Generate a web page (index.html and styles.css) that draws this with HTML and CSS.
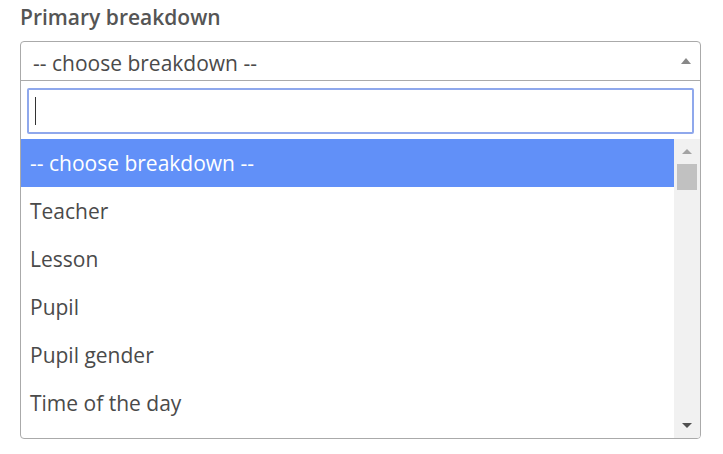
FILE: index.html
```html
<!DOCTYPE html>
<html>
<head>
<meta charset="utf-8">
<link rel="stylesheet" href="styles.css">
</head>
<body>
<div class="field">
  <div class="label">Primary breakdown</div>
  <div class="combo">
    <div class="selection">
      <span class="selection-text">-- choose breakdown --</span>
      <span class="arrow"></span>
    </div>
    <div class="dropdown">
      <div class="search"><span class="caret"></span></div>
      <div class="results">
        <ul class="options">
          <li class="option highlighted">-- choose breakdown --</li>
          <li class="option">Teacher</li>
          <li class="option">Lesson</li>
          <li class="option">Pupil</li>
          <li class="option">Pupil gender</li>
          <li class="option">Time of the day</li>
        </ul>
        <div class="scrollbar">
          <div class="sb-btn"><span class="tri-up"></span></div>
          <div class="thumb"></div>
          <div class="sb-track"></div>
          <div class="sb-btn"><span class="tri-down"></span></div>
        </div>
      </div>
    </div>
  </div>
</div>
</body>
</html>
```

FILE: styles.css
```css
html, body {
  margin: 0;
  padding: 0;
  background: #fff;
}
body {
  font-family: "Open Sans", "Liberation Sans", sans-serif;
  color: #444;
}
.field {
  padding: 4px 0 0 20px;
  width: 681px;
}
.label {
  font-size: 21px;
  font-weight: 600;
  color: #555;
  line-height: 26px;
  height: 26px;
  margin-bottom: 11px;
}
.combo {
  border: 1px solid #aaa;
  border-radius: 4px;
  overflow: hidden;
}
.selection {
  height: 38px;
  border-bottom: 1px solid #aaa;
  display: flex;
  align-items: center;
  justify-content: space-between;
  padding: 0 8px 0 12px;
}
.selection-text {
  font-size: 21px;
  color: #4a4a4a;
  line-height: 26px;
  padding-top: 3px;
}
.arrow {
  width: 0;
  height: 0;
  border-left: 5px solid transparent;
  border-right: 5px solid transparent;
  border-bottom: 6px solid #888;
  margin-right: 1px;
}
.dropdown {
  padding-top: 7px;
}
.search {
  margin: 0 6px;
  height: 42px;
  border: 2px solid #8fa8ec;
  border-radius: 2px;
  display: flex;
  align-items: center;
  padding-left: 6px;
}
.caret {
  display: block;
  width: 1px;
  height: 28px;
  background: #333;
}
.results {
  margin-top: 5px;
  height: 299px;
  display: flex;
  overflow: hidden;
}
.options {
  list-style: none;
  margin: 0;
  padding: 0;
  flex: 1;
}
.option {
  height: 48px;
  line-height: 48px;
  padding-left: 9px;
  font-size: 21px;
  color: #4a4a4a;
}
.option.highlighted {
  background: #6190f8;
  color: #fff;
}
.scrollbar {
  width: 26px;
  background: #f1f1f1;
  display: flex;
  flex-direction: column;
}
.sb-btn {
  height: 25px;
  display: flex;
  align-items: center;
  justify-content: center;
}
.sb-track {
  flex: 1;
}
.thumb {
  height: 26px;
  margin: 0 3px;
  background: #c1c1c1;
}
.tri-up {
  width: 0;
  height: 0;
  border-left: 5px solid transparent;
  border-right: 5px solid transparent;
  border-bottom: 5px solid #a3a3a3;
}
.tri-down {
  width: 0;
  height: 0;
  border-left: 5px solid transparent;
  border-right: 5px solid transparent;
  border-top: 5px solid #505050;
}
```
